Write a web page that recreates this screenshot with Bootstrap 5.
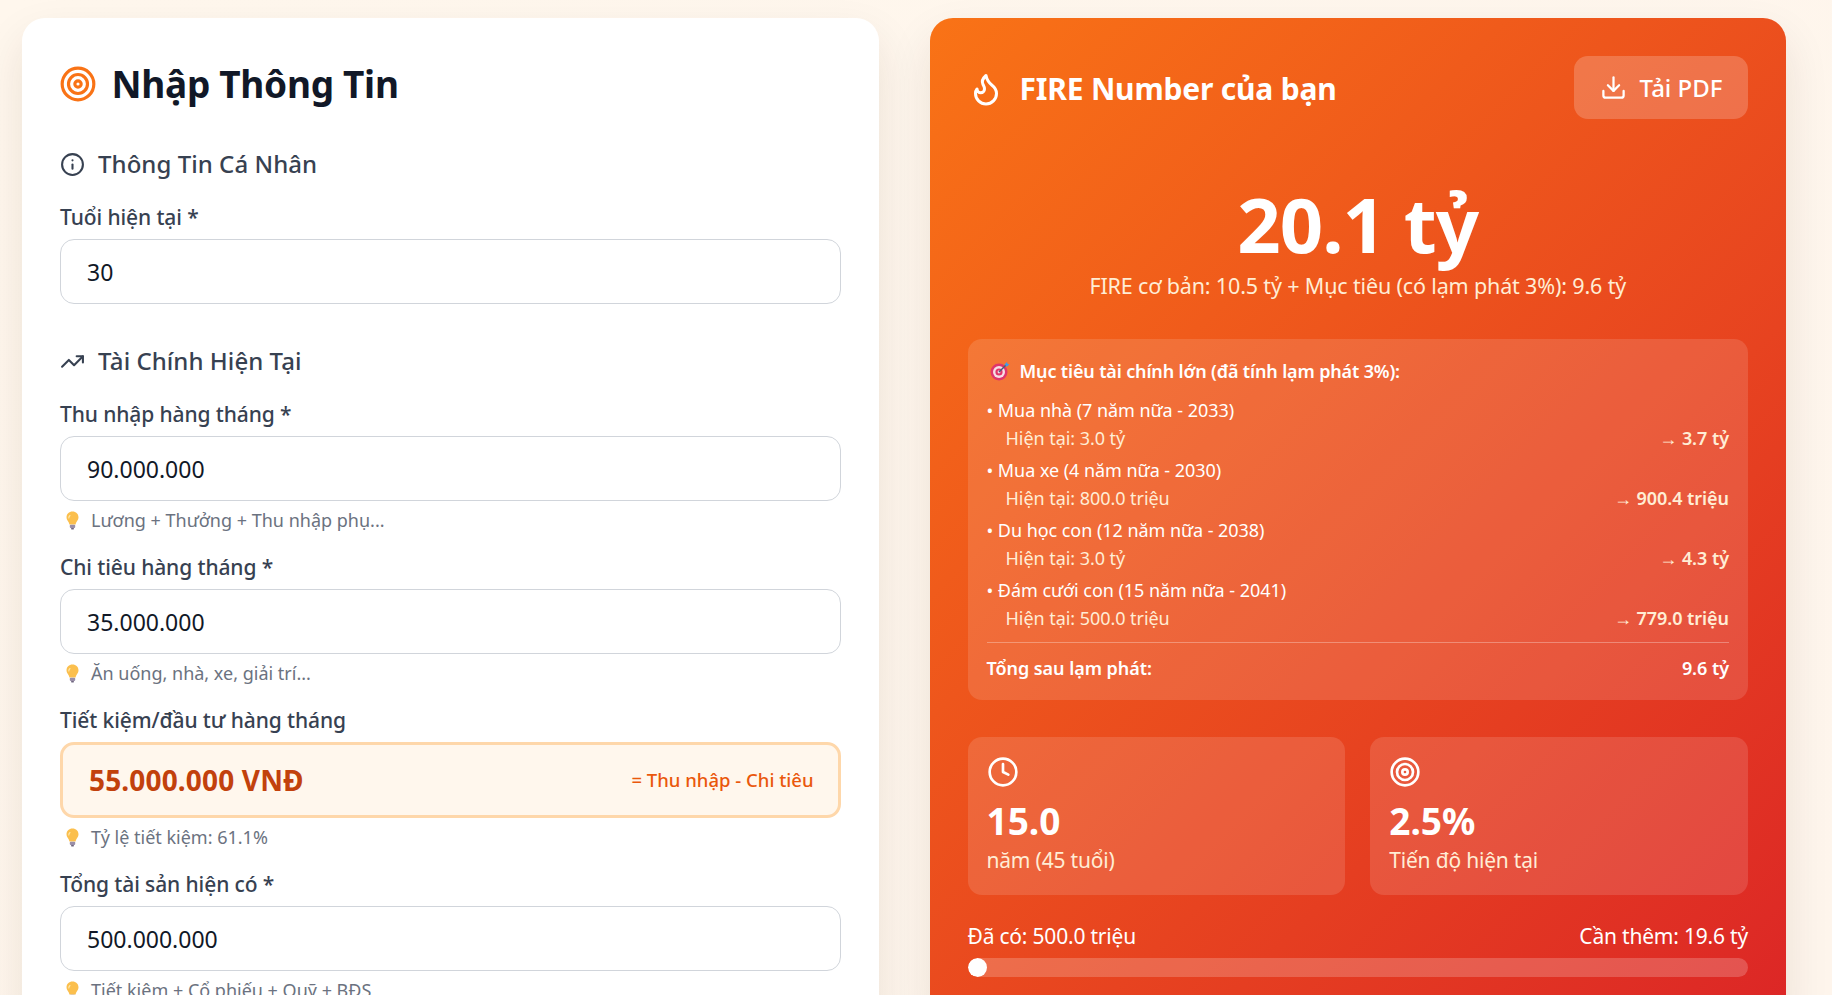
<!DOCTYPE html>
<html lang="vi">
<head>
  <meta charset="UTF-8" />
  <meta name="viewport" content="width=device-width, initial-scale=1.0">
  <title>FIRE Number</title>
  <link href="https://cdn.jsdelivr.net/npm/bootstrap@5.3.3/dist/css/bootstrap.min.css" rel="stylesheet">
  <style>
    html, body { height: 100%; }
    body {
      background: linear-gradient(135deg, #fff7ed, #fef5ec);
      font-family: "Noto Sans", "Open Sans", sans-serif;
      overflow: hidden;
    }
    .page-wrap {
      height: 100vh;
      overflow: hidden;
      padding: 18px 46px 0 22px;
      gap: 51px;
    }
    .panel {
      flex: 1 1 50%;
      min-width: 0;
      height: 1100px;
      border-radius: 23px;
      padding: 38px;
      box-shadow: 0 20px 45px rgba(60, 30, 0, .1);
    }
    .panel-form { background: #fff; }
    .panel-fire {
      height: 1000px;
      color: #fff;
      background: linear-gradient(135deg, #f97316, #dc2626);
    }
    .form-title {
      height: 56px;
      gap: 15px;
      margin-bottom: 37px;
      font-size: 37px;
      font-weight: 700;
      letter-spacing: -.3px;
      color: #111827;
    }
    .form-title svg { width: 38px; height: 38px; margin-left: -1.5px; color: #f97316; }
    .group-head {
      height: 30px;
      gap: 13px;
      margin-bottom: 24px;
      font-size: 24px;
      font-weight: 500;
      letter-spacing: .05px;
      color: #374151;
    }
    .group-head svg { width: 25px; height: 25px; }
    .group-head.next-group { margin-top: 42px; }
    .field-label {
      display: block;
      height: 28px;
      line-height: 28px;
      margin-bottom: 8px;
      font-size: 21px;
      font-weight: 500;
      letter-spacing: -.1px;
      color: #374151;
    }
    .field-input.form-control {
      height: 65px;
      padding: 0 26px;
      font-size: 23px;
      letter-spacing: 0;
      color: #111827;
      border: 1.5px solid #d1d5db;
      border-radius: 14px;
    }
    .field-hint {
      height: 26px;
      line-height: 26px;
      margin-top: 6px;
      margin-bottom: 20px;
      gap: 11px;
      padding-left: 5px;
      font-size: 18px;
      letter-spacing: 0;
      color: #6b7280;
    }
    .field-hint svg { width: 15px; height: 19px; }
    .saving-box {
      height: 76px;
      padding: 0 24px 0 26px;
      background: #fff7ed;
      border: 3px solid #fed7aa;
      border-radius: 14px;
    }
    .saving-amount { font-size: 28px; font-weight: 700; letter-spacing: .15px; color: #c2410c; }
    .saving-note { font-size: 18.5px; font-weight: 500; letter-spacing: 0; color: #ea580c; }

    .fire-head { height: 63px; }
    .fire-title { gap: 16px; padding-top: 2px; font-size: 30px; font-weight: 700; letter-spacing: -.2px; }
    .fire-title svg { width: 36px; height: 36px; }
    .btn.pdf-btn {
      height: 63px;
      width: 174px;
      gap: 13px;
      padding: 0;
      font-size: 24px;
      font-weight: 500;
      color: #fff;
      background: rgba(255, 255, 255, .2);
      border: 0;
      border-radius: 14px;
    }
    .pdf-btn svg { width: 27px; height: 27px; }
    .fire-big {
      margin-top: 61px;
      height: 88px;
      line-height: 88px;
      font-size: 76px;
      font-weight: 700;
      letter-spacing: -1px;
    }
    .fire-sub {
      height: 30px;
      line-height: 30px;
      margin-top: 3px;
      font-size: 21.5px;
      letter-spacing: -.15px;
      color: #ffedd5;
    }
    .goals-box {
      margin-top: 38px;
      padding: 19px 19px 19px;
      background: rgba(255, 255, 255, .13);
      border-radius: 14px;
      font-size: 18px;
      letter-spacing: -.05px;
    }
    .goals-title { height: 26px; gap: 10px; margin-bottom: 12px; font-weight: 600; letter-spacing: -.15px; }
    .goals-title svg { width: 20px; height: 20px; margin-left: 3px; }
    .goal-item { height: 60px; }
    .goal-name, .goal-now { height: 28px; line-height: 28px; }
    .goal-now { padding-left: 19px; color: #ffedd5; }
    .goal-now b { font-weight: 600; }
    .goals-total {
      height: 26px;
      margin-top: 6px;
      padding-top: 12px;
      line-height: 26px;
      border-top: 1px solid rgba(255, 255, 255, .3);
      font-weight: 600;
      box-sizing: content-box;
    }
    .stat-row { gap: 25px; margin-top: 37px; }
    .stat-tile {
      flex: 1 1 0;
      height: 158px;
      padding: 19px 19px;
      background: rgba(255, 255, 255, .13);
      border-radius: 14px;
    }
    .stat-tile svg { display: block; width: 32px; height: 32px; }
    .stat-num { margin-top: 10px; height: 47px; line-height: 46px; font-size: 37px; font-weight: 700; letter-spacing: 0; }
    .stat-text { height: 30px; line-height: 30px; font-size: 21px; letter-spacing: -.2px; color: #ffedd5; }
    .progress-labels { height: 30px; line-height: 30px; margin-top: 26px; font-size: 21px; letter-spacing: -.2px; }
    .progress.goal-bar {
      height: 19px;
      margin-top: 7px;
      background: rgba(255, 255, 255, .2);
      border-radius: 10px;
    }
    .goal-bar .progress-bar { background: #fff; border-radius: 10px; }
  </style>
</head>
<body>
<svg width="0" height="0" class="position-absolute">
  <defs>
    <symbol id="ic-target" viewBox="0 0 24 24" fill="none" stroke="currentColor" stroke-width="2" stroke-linecap="round" stroke-linejoin="round">
      <circle cx="12" cy="12" r="10"/><circle cx="12" cy="12" r="6"/><circle cx="12" cy="12" r="2"/>
    </symbol>
    <symbol id="ic-bulb" viewBox="0 0 15 19">
      <path d="M7.5 0.5C3.9 0.5 1.5 3.2 1.5 6.3c0 2.5 1.6 3.7 2.4 5.5.3.7.4 1.2.5 1.7h6.2c.1-.5.2-1 .5-1.7.8-1.8 2.4-3 2.4-5.5C13.500 3.200 11.100.5 7.500.5z" fill="#fbbf4d"/>
      <path d="M5 4.500C4.200 5.200 3.800 6 3.800 7" stroke="#fde9b0" stroke-width="1.100" fill="none" stroke-linecap="round"/>
      <rect x="4.800" y="13.800" width="5.400" height="3.200" rx="1" fill="#9a8fa8"/>
      <rect x="6" y="17" width="3" height="1.500" rx=".7" fill="#6f6680"/>
    </symbol>
  </defs>
</svg>

<div class="page-wrap d-flex align-items-start">
  <!-- Form nhap lieu -->
  <div class="panel panel-form">
    <div class="form-title d-flex align-items-center">
      <svg><use href="#ic-target"/></svg>
      <span>Nhập Thông Tin</span>
    </div>

    <div class="group-head d-flex align-items-center">
      <svg viewBox="0 0 24 24" fill="none" stroke="currentColor" stroke-width="2" stroke-linecap="round" stroke-linejoin="round"><circle cx="12" cy="12" r="10"/><path d="M12 16v-4"/><path d="M12 8h.01"/></svg>
      <span>Thông Tin Cá Nhân</span>
    </div>
    <label class="field-label">Tuổi hiện tại *</label>
    <input class="form-control field-input" value="30">

    <div class="group-head next-group d-flex align-items-center">
      <svg viewBox="0 0 24 24" fill="none" stroke="currentColor" stroke-width="2" stroke-linecap="round" stroke-linejoin="round"><polyline points="22 7 13.500 15.500 8.500 10.500 2 17"/><polyline points="16 7 22 7 22 13"/></svg>
      <span>Tài Chính Hiện Tại</span>
    </div>
    <label class="field-label">Thu nhập hàng tháng *</label>
    <input class="form-control field-input" value="90.000.000">
    <div class="field-hint d-flex align-items-center"><svg><use href="#ic-bulb"/></svg><span>Lương + Thưởng + Thu nhập phụ...</span></div>

    <label class="field-label">Chi tiêu hàng tháng *</label>
    <input class="form-control field-input" value="35.000.000">
    <div class="field-hint d-flex align-items-center"><svg><use href="#ic-bulb"/></svg><span>Ăn uống, nhà, xe, giải trí...</span></div>

    <label class="field-label">Tiết kiệm/đầu tư hàng tháng</label>
    <div class="saving-box d-flex align-items-center justify-content-between">
      <span class="saving-amount">55.000.000 VNĐ</span>
      <span class="saving-note">= Thu nhập - Chi tiêu</span>
    </div>
    <div class="field-hint d-flex align-items-center"><svg><use href="#ic-bulb"/></svg><span>Tỷ lệ tiết kiệm: 61.1%</span></div>

    <label class="field-label">Tổng tài sản hiện có *</label>
    <input class="form-control field-input" value="500.000.000">
    <div class="field-hint d-flex align-items-center"><svg><use href="#ic-bulb"/></svg><span>Tiết kiệm + Cổ phiếu + Quỹ + BĐS</span></div>
  </div>

  <!-- Ket qua FIRE -->
  <div class="panel panel-fire">
    <div class="fire-head d-flex align-items-center justify-content-between">
      <div class="fire-title d-flex align-items-center">
        <svg viewBox="0 0 24 24" fill="none" stroke="currentColor" stroke-width="2" stroke-linecap="round" stroke-linejoin="round"><path d="M8.500 14.500A2.500 2.500 0 0 0 11 12c0-1.380-.5-2-1-3-1.072-2.143-.224-4.054 2-6 .5 2.500 2 4.900 4 6.500 2 1.600 3 3.500 3 5.500a7 7 0 1 1-14 0c0-1.153.433-2.294 1-3a2.500 2.500 0 0 0 2.500 2.500z"/></svg>
        <span>FIRE Number của bạn</span>
      </div>
      <button class="btn pdf-btn d-flex align-items-center justify-content-center">
        <svg viewBox="0 0 24 24" fill="none" stroke="currentColor" stroke-width="2" stroke-linecap="round" stroke-linejoin="round"><path d="M21 15v4a2 2 0 0 1-2 2H5a2 2 0 0 1-2-2v-4"/><polyline points="7 10 12 15 17 10"/><line x1="12" y1="15" x2="12" y2="3"/></svg>
        <span>Tải PDF</span>
      </button>
    </div>

    <div class="fire-big text-center">20.1 tỷ</div>
    <div class="fire-sub text-center">FIRE cơ bản: 10.5 tỷ + Mục tiêu (có lạm phát 3%): 9.6 tỷ</div>

    <div class="goals-box">
      <div class="goals-title d-flex align-items-center">
        <svg viewBox="0 0 20 20">
          <circle cx="9" cy="11" r="8.500" fill="#e0356b"/>
          <circle cx="9" cy="11" r="6" fill="#f6dfe6"/>
          <circle cx="9" cy="11" r="3.600" fill="#e0356b"/>
          <circle cx="9" cy="11" r="1.400" fill="#f6dfe6"/>
          <path d="M9 11 16 4" stroke="#4a5a78" stroke-width="1.400"/>
          <path d="M14.500 3.500 17 1l.5 1.800 1.800.5-2.500 2.500z" fill="#3f9be8"/>
        </svg>
        <span>Mục tiêu tài chính lớn (đã tính lạm phát 3%):</span>
      </div>
      <div class="goal-item">
        <div class="goal-name">• Mua nhà (7 năm nữa - 2033)</div>
        <div class="goal-now d-flex justify-content-between"><span>Hiện tại: 3.0 tỷ</span><span>→ <b>3.7 tỷ</b></span></div>
      </div>
      <div class="goal-item">
        <div class="goal-name">• Mua xe (4 năm nữa - 2030)</div>
        <div class="goal-now d-flex justify-content-between"><span>Hiện tại: 800.0 triệu</span><span>→ <b>900.4 triệu</b></span></div>
      </div>
      <div class="goal-item">
        <div class="goal-name">• Du học con (12 năm nữa - 2038)</div>
        <div class="goal-now d-flex justify-content-between"><span>Hiện tại: 3.0 tỷ</span><span>→ <b>4.3 tỷ</b></span></div>
      </div>
      <div class="goal-item">
        <div class="goal-name">• Đám cưới con (15 năm nữa - 2041)</div>
        <div class="goal-now d-flex justify-content-between"><span>Hiện tại: 500.0 triệu</span><span>→ <b>779.0 triệu</b></span></div>
      </div>
      <div class="goals-total d-flex justify-content-between"><span>Tổng sau lạm phát:</span><span>9.6 tỷ</span></div>
    </div>

    <div class="stat-row d-flex">
      <div class="stat-tile">
        <svg viewBox="0 0 24 24" fill="none" stroke="currentColor" stroke-width="2" stroke-linecap="round" stroke-linejoin="round"><circle cx="12" cy="12" r="10"/><polyline points="12 6 12 12 16 14"/></svg>
        <div class="stat-num">15.0</div>
        <div class="stat-text">năm (45 tuổi)</div>
      </div>
      <div class="stat-tile">
        <svg><use href="#ic-target"/></svg>
        <div class="stat-num">2.5%</div>
        <div class="stat-text">Tiến độ hiện tại</div>
      </div>
    </div>

    <div class="progress-labels d-flex justify-content-between"><span>Đã có: 500.0 triệu</span><span>Cần thêm: 19.6 tỷ</span></div>
    <div class="progress goal-bar"><div class="progress-bar" style="width: 2.5%"></div></div>
  </div>
</div>
</body>
</html>
